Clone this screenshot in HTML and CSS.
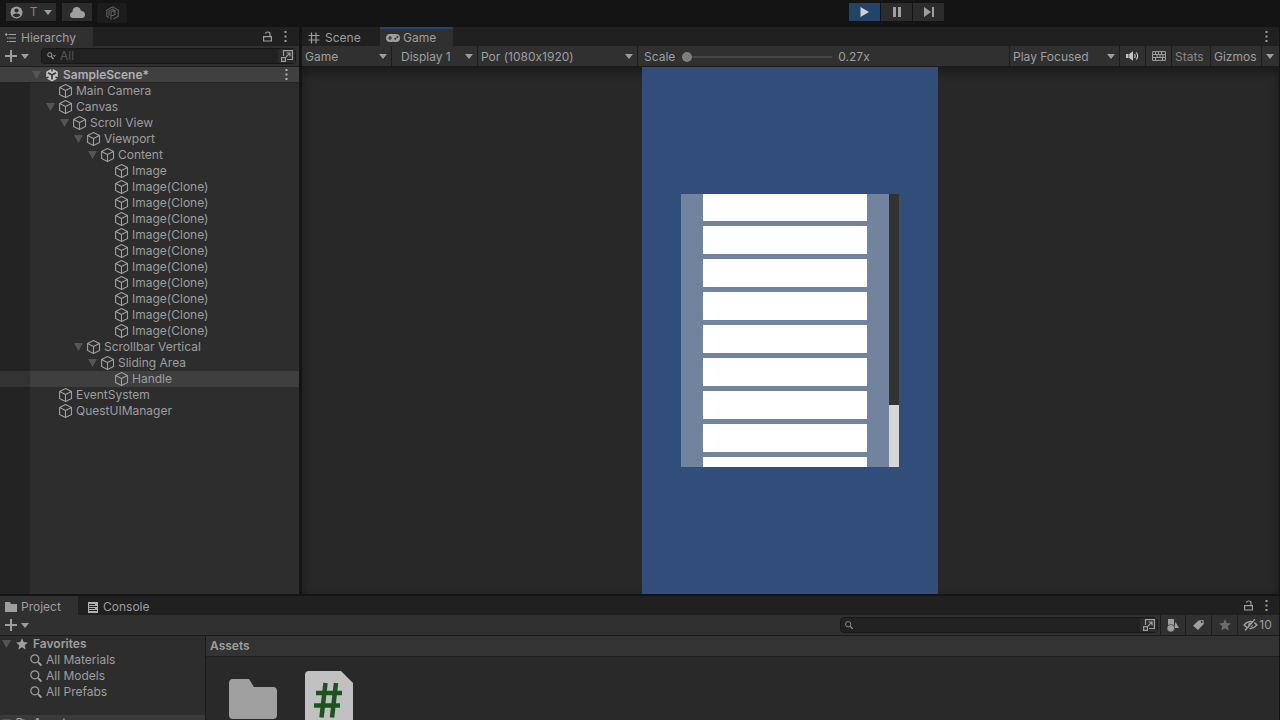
FILE: index.html
```html
<!DOCTYPE html>
<html lang="en">
<head>
<meta charset="utf-8">
<title>SampleScene - Editor</title>
<link rel="stylesheet" href="styles.css">
</head>
<body>
<svg class="defs" aria-hidden="true">
  <symbol id="cube" viewBox="0 0 14 14"><path d="M6.5 .6 12.5 3.4V10.6L6.5 13.4.6 10.6V3.4ZM.6 3.4 6.5 6.5 12.5 3.4M6.5 6.500V13.4" fill="none" stroke="currentColor" stroke-width="1.1" stroke-linejoin="round"/></symbol>
  <symbol id="unity" viewBox="0 0 14 14"><path d="M7 .5 12.8 3.7V10.3L7 13.5 1.2 10.3V3.7Z" fill="#c4c4c4"/><path d="M7 7V11.5M7 7 3 4.8M7 7 11 4.8" stroke="#3a3a3a" stroke-width="1.7" fill="none"/><path d="M7 0V3.4M0 10.8 3.6 8.8M14 10.8 10.4 8.8" stroke="#3a3a3a" stroke-width="1.5"/></symbol>
  <symbol id="arrow" viewBox="0 0 9 8"><path d="M0 0H9L4.5 8Z" fill="currentColor"/></symbol>
  <symbol id="plus" viewBox="0 0 12 12"><path d="M6 0V12M0 6H12" stroke="currentColor" stroke-width="2"/></symbol>
  <symbol id="dots" viewBox="0 0 3 11"><path d="M.5 0h2v2h-2zM.5 4.5h2v2h-2zM.5 9h2v2h-2z" fill="currentColor"/></symbol>
  <symbol id="lock" viewBox="0 0 9 11"><path d="M.6 5.6H8.4V10H.6ZM7 5.4V2.8Q7 1 4.8 1 2.6 1 2.5 2.6" fill="none" stroke="currentColor" stroke-width="1.2"/></symbol>
  <symbol id="popout" viewBox="0 0 12 12"><path d="M2.5 6V.6H11.4V9.5H6M.6 7.6H4.4V11.4H.6ZM5 7 8.8 3.2M5.6 3H9V6.5" fill="none" stroke="currentColor" stroke-width="1.2"/></symbol>
  <symbol id="lens" viewBox="0 0 12 12"><circle cx="4.8" cy="4.8" r="4" fill="none" stroke="currentColor" stroke-width="1.2"/><path d="M8 8 11.4 11.6" stroke="currentColor" stroke-width="1.9"/></symbol>
  <symbol id="star" viewBox="0 0 12 12"><path d="M6 .2 7.7 4.1 11.9 4.5 8.7 7.3 9.7 11.6 6 9.3 2.3 11.6 3.3 7.3.1 4.5 4.3 4.1Z" fill="currentColor"/></symbol>
  <symbol id="folder" viewBox="0 0 48 40"><path d="M4 0H20L25 8H44Q48 8 48 12V36Q48 40 44 40H4Q0 40 0 36V4Q0 0 4 0Z" fill="currentColor"/></symbol>
</svg>

<header class="topbar">
  <button class="top-btn account" aria-label="Account">
    <svg width="13" height="13" viewBox="0 0 13 13"><circle cx="6.5" cy="6.5" r="6" fill="#9f9f9f"/><circle cx="6.5" cy="4.5" r="2.1" fill="#2c2c2c"/><path d="M2.7 9.6Q3 7.6 6.5 7.6T10.3 9.6Q8.8 11.2 6.5 11.2T2.7 9.6Z" fill="#2c2c2c"/></svg>
    <span class="account-name">T</span><span class="caret"></span>
  </button>
  <button class="top-btn" aria-label="Cloud">
    <svg width="15" height="11" viewBox="0 0 15 11"><path d="M3.2 11Q0 10.7 0 7.9 0 5.5 2.4 5.1 2.6 0 6.8 0 10.2 0 11 3.8 15 4.2 15 7.5 15 10.8 12 11Z" fill="#9f9f9f"/></svg>
  </button>
  <button class="top-btn dim" aria-label="Packages">
    <svg width="13" height="14" viewBox="0 0 13 14"><path d="M3 11.6.8 10.2V4L6.5.8 12.2 4V10.2L7.5 13M5 13.5V6.3L6.5 5H7.500L9 6.3V8.3L7.500 9.500H5M3 9.800V5.200L6.500 3.100 10 5.200" fill="none" stroke="#606060" stroke-width="1.1"/></svg>
  </button>
  <div class="playback">
    <button class="top-btn on" aria-label="Play"><svg width="9" height="10" viewBox="0 0 9 10"><path d="M.5 0 9 5 .5 10Z" fill="#d0d0d0"/></svg></button>
    <button class="top-btn" aria-label="Pause"><svg width="8" height="10" viewBox="0 0 8 10"><path d="M0 0H3V10H0ZM5 0H8V10H5Z" fill="#9f9f9f"/></svg></button>
    <button class="top-btn" aria-label="Step"><svg width="10" height="10" viewBox="0 0 10 10"><path d="M0 0 7 5 0 10ZM8 0H10V10H8Z" fill="#9f9f9f"/></svg></button>
  </div>
</header>

<main class="upper">
  <section class="panel hierarchy">
    <div class="tabs">
      <button class="tab active tab-hierarchy"><svg width="11" height="10" viewBox="0 0 11 10"><path d="M0 1.5H2.5M3.5 1.5H11M3.5 5H11M3.5 8.5H11M1.3 0V3M2 5H3M2 8.5H3" stroke="currentColor" stroke-width="1.1"/></svg>Hierarchy</button>
      <span class="tab-tools">
        <button class="plain" aria-label="Lock"><svg width="9" height="11"><use href="#lock"/></svg></button>
        <button class="plain" aria-label="Hierarchy menu"><svg width="3" height="11"><use href="#dots"/></svg></button>
      </span>
    </div>
    <div class="bar hierarchy-bar">
      <button class="plain add" aria-label="Create"><svg width="12" height="12"><use href="#plus"/></svg><span class="caret"></span></button>
      <div class="search">
        <svg width="9" height="8" viewBox="0 0 9 8"><circle cx="2.8" cy="2.8" r="2.1" fill="none" stroke="currentColor"/><path d="M4.2 4.3 6.5 7" stroke="currentColor" stroke-width="1.3"/><path d="M6 3.2H9L7.5 5Z" fill="currentColor"/></svg>
        <input type="text" placeholder="All" aria-label="Search hierarchy">
        <button class="plain" aria-label="Open search window"><svg width="12" height="12"><use href="#popout"/></svg></button>
      </div>
    </div>
    <ul class="tree">
      <li class="row scene"><span class="fold"><svg><use href="#arrow"/></svg></span><svg class="ico"><use href="#unity"/></svg>SampleScene*<button class="plain scene-menu" aria-label="Scene menu"><svg width="3" height="11"><use href="#dots"/></svg></button></li>
      <li class="row l1"><span class="fold"></span><svg class="ico"><use href="#cube"/></svg>Main Camera</li>
      <li class="row l1"><span class="fold"><svg><use href="#arrow"/></svg></span><svg class="ico"><use href="#cube"/></svg>Canvas</li>
      <li class="row l2"><span class="fold"><svg><use href="#arrow"/></svg></span><svg class="ico"><use href="#cube"/></svg>Scroll View</li>
      <li class="row l3"><span class="fold"><svg><use href="#arrow"/></svg></span><svg class="ico"><use href="#cube"/></svg>Viewport</li>
      <li class="row l4"><span class="fold"><svg><use href="#arrow"/></svg></span><svg class="ico"><use href="#cube"/></svg>Content</li>
      <li class="row l5"><span class="fold"></span><svg class="ico"><use href="#cube"/></svg>Image</li>
      <li class="row l5"><span class="fold"></span><svg class="ico"><use href="#cube"/></svg>Image(Clone)</li>
      <li class="row l5"><span class="fold"></span><svg class="ico"><use href="#cube"/></svg>Image(Clone)</li>
      <li class="row l5"><span class="fold"></span><svg class="ico"><use href="#cube"/></svg>Image(Clone)</li>
      <li class="row l5"><span class="fold"></span><svg class="ico"><use href="#cube"/></svg>Image(Clone)</li>
      <li class="row l5"><span class="fold"></span><svg class="ico"><use href="#cube"/></svg>Image(Clone)</li>
      <li class="row l5"><span class="fold"></span><svg class="ico"><use href="#cube"/></svg>Image(Clone)</li>
      <li class="row l5"><span class="fold"></span><svg class="ico"><use href="#cube"/></svg>Image(Clone)</li>
      <li class="row l5"><span class="fold"></span><svg class="ico"><use href="#cube"/></svg>Image(Clone)</li>
      <li class="row l5"><span class="fold"></span><svg class="ico"><use href="#cube"/></svg>Image(Clone)</li>
      <li class="row l5"><span class="fold"></span><svg class="ico"><use href="#cube"/></svg>Image(Clone)</li>
      <li class="row l3"><span class="fold"><svg><use href="#arrow"/></svg></span><svg class="ico"><use href="#cube"/></svg>Scrollbar Vertical</li>
      <li class="row l4"><span class="fold"><svg><use href="#arrow"/></svg></span><svg class="ico"><use href="#cube"/></svg>Sliding Area</li>
      <li class="row l5 selected"><span class="fold"></span><svg class="ico"><use href="#cube"/></svg>Handle</li>
      <li class="row l1"><span class="fold"></span><svg class="ico"><use href="#cube"/></svg>EventSystem</li>
      <li class="row l1"><span class="fold"></span><svg class="ico"><use href="#cube"/></svg>QuestUIManager</li>
    </ul>
  </section>

  <section class="panel game">
    <div class="tabs">
      <button class="tab tab-scene"><svg width="12" height="12" viewBox="0 0 12 12"><path d="M3.5.5V11.5M8 .5V11.5M.5 3.5H11.5M.5 8H11.5" stroke="currentColor" stroke-width="1.2"/></svg>Scene</button>
      <button class="tab active focused tab-game"><svg width="14" height="8" viewBox="0 0 14 8"><rect width="14" height="8" rx="4" fill="currentColor"/><path d="M2 4H6M4 2V6" stroke="#303030" stroke-width="1.2"/><circle cx="9.3" cy="4.8" r="1" fill="#303030"/><circle cx="11.3" cy="3" r="1" fill="#303030"/><path d="M6 8Q7 6.8 8 8Z" fill="#303030"/></svg>Game</button>
      <span class="tab-tools"><button class="plain" aria-label="Game menu"><svg width="3" height="11"><use href="#dots"/></svg></button></span>
    </div>
    <div class="bar game-bar">
      <span class="drop drop-view"><select aria-label="View"><option>Game</option><option>Simulator</option></select><span class="caret"></span></span>
      <span class="drop drop-display"><select aria-label="Display"><option>Display 1</option><option>Display 2</option></select><span class="caret"></span></span>
      <span class="drop drop-size"><select aria-label="Resolution"><option>Por (1080x1920)</option><option>Free Aspect</option></select><span class="caret"></span></span>
      <span class="scale"><label for="scale">Scale</label><input id="scale" type="range" min="0" max="100" value="0"><output for="scale">0.27x</output></span>
      <span class="drop drop-play"><select aria-label="Play mode"><option>Play Focused</option><option>Play Maximized</option></select><span class="caret"></span></span>
      <button class="cell icon-cell lit" aria-label="Mute audio"><svg width="13" height="10" viewBox="0 0 13 10"><path d="M0 3H2.5V7H0ZM3.2 3 7 .3V9.7L3.2 7Z" fill="currentColor"/><path d="M8.5 3Q9.8 5 8.5 7M10.3 1.5Q13 5 10.3 8.5" fill="none" stroke="currentColor" stroke-width="1.2"/></svg></button>
      <button class="cell icon-cell" aria-label="Shortcuts"><svg width="14" height="10" viewBox="0 0 14 10"><path d="M.6.6H13.4V9.4H.6ZM.6 3.5H13.4M.6 6.5H13.4M3.5.6V3.5M6.5.6V3.5M9.5.6V3.5M5 3.5V6.5M8 3.5V6.5M11 3.5V6.5M3.5 6.5V9.4M10.5 6.5V9.4" fill="none" stroke="currentColor"/></svg></button>
      <button class="cell stats">Stats</button>
      <button class="cell gizmos">Gizmos</button>
      <button class="gizmo-menu" aria-label="Gizmo options"><span class="caret"></span></button>
    </div>
    <div class="viewport">
      <div class="screen">
        <div class="scroll-view">
          <div class="items"><i></i><i></i><i></i><i></i><i></i><i></i><i></i><i></i><i></i></div>
          <div class="scrollbar"><div class="handle"></div></div>
        </div>
      </div>
    </div>
  </section>
</main>

<section class="panel lower">
  <div class="tabs">
    <button class="tab active tab-project"><svg width="12" height="10" viewBox="0 0 12 10"><path d="M0 0H5L6 2H12V10H0Z" fill="currentColor"/></svg>Project</button>
    <button class="tab tab-console"><svg width="10" height="11" viewBox="0 0 10 11"><path d="M0 0H10V11H0Z" fill="#b0b0b0"/><path d="M1 2.500H7M1 4.500H9M1 6.500H7M1 8.500H9" stroke="#202020"/></svg>Console</button>
    <span class="tab-tools">
      <button class="plain" aria-label="Lock project"><svg width="9" height="11"><use href="#lock"/></svg></button>
      <button class="plain" aria-label="Project menu"><svg width="3" height="11"><use href="#dots"/></svg></button>
    </span>
  </div>
  <div class="bar project-bar">
    <button class="plain add" aria-label="Create asset"><svg width="12" height="12"><use href="#plus"/></svg><span class="caret"></span></button>
    <div class="search project-search">
      <svg width="8" height="8"><use href="#lens"/></svg>
      <input type="text" aria-label="Search project">
      <button class="plain" aria-label="Open search window"><svg width="12" height="12"><use href="#popout"/></svg></button>
    </div>
    <button class="cell icon-cell" aria-label="Search by type"><svg width="12" height="13" viewBox="0 0 12 13"><path d="M1 0H7V6H1ZM8.5 3 12 9H7Z" fill="currentColor"/><circle cx="3.8" cy="9.2" r="3.8" fill="currentColor" stroke="#303030" stroke-width=".6"/></svg></button>
    <button class="cell icon-cell" aria-label="Search by label"><svg width="11" height="10" viewBox="0 0 11 10"><path d="M5.5.5 10.5 0 10.8 4 5 10 0 5.8Z" fill="currentColor"/><circle cx="8.7" cy="2" r="1" fill="#303030"/></svg></button>
    <button class="cell icon-cell faint" aria-label="Save search"><svg width="12" height="12"><use href="#star"/></svg></button>
    <button class="cell hidden-count" aria-label="Hidden packages, 10"><svg width="15" height="12" viewBox="0 0 15 12"><path d="M1 6Q7.5-1 14 6 7.5 13 1 6Z" fill="none" stroke="currentColor" stroke-width="1.3"/><circle cx="7.5" cy="6" r="2.3" fill="currentColor"/><path d="M3 12.5 13 .5" stroke="#303030" stroke-width="1.3"/><path d="M2 11.5 12 0" stroke="currentColor" stroke-width="1.3"/></svg>10</button>
  </div>
  <div class="project-body">
    <ul class="favorites">
      <li class="row fav-head"><span class="fold"><svg><use href="#arrow"/></svg></span><svg width="12" height="12"><use href="#star"/></svg>Favorites</li>
      <li class="row fav"><svg width="12" height="12"><use href="#lens"/></svg>All Materials</li>
      <li class="row fav"><svg width="12" height="12"><use href="#lens"/></svg>All Models</li>
      <li class="row fav"><svg width="12" height="12"><use href="#lens"/></svg>All Prefabs</li>
      <li class="row fav-head assets-row"><span class="fold"><svg><use href="#arrow"/></svg></span><svg width="12" height="10" viewBox="0 0 12 10"><path d="M1 .6H4.500L6 2H8V4M1 .6V9.4H9L11 4H3L1 9.4" fill="none" stroke="currentColor" stroke-width="1.2"/></svg>Assets</li>
    </ul>
    <div class="assets">
      <h2>Assets</h2>
      <div class="tiles">
        <svg class="tile-folder" width="48" height="40" role="img" aria-label="Folder"><use href="#folder"/></svg>
        <svg width="48" height="56" viewBox="0 0 48 56" role="img" aria-label="C# script"><path d="M4 0H36L48 12V52Q48 56 44 56H4Q0 56 0 52V4Q0 0 4 0Z" fill="#c1c1c1"/><path d="M20.5 12 16.5 46.500M31 12 27 46.500M11 22H37M9 34.500H35" stroke="#1c5420" stroke-width="4.500" fill="none"/></svg>
      </div>
    </div>
  </div>
</section>
</body>
</html>
```

FILE: styles.css
```css
* { box-sizing: border-box; }
body {
  margin: 0;
  height: 100vh;
  display: flex;
  flex-direction: column;
  overflow: hidden;
  background: #141414;
  color: #9e9e9e;
  font: 12px/16px Inter, "Liberation Sans", sans-serif;
  font-feature-settings: "calt" 0;
}
button, input, select {
  margin: 0;
  padding: 0;
  border: 0;
  border-radius: 0;
  background: none;
  color: inherit;
  font: inherit;
  font-feature-settings: inherit;
}
svg { display: block; flex: none; }
ul { margin: 0; padding: 0; list-style: none; }
.defs { position: absolute; width: 0; height: 0; }
.plain { display: flex; align-items: center; }
.caret {
  flex: none;
  border: 4px solid transparent;
  border-top: 5px solid #9e9e9e;
  border-bottom: 0;
}

/* top toolbar */
.topbar {
  flex: none;
  display: flex;
  align-items: flex-start;
  gap: 5px;
  height: 27px;
  padding: 3px 336px 0 6px;
}
.top-btn {
  display: flex;
  align-items: center;
  justify-content: center;
  width: 30px;
  height: 18px;
  background: #2c2c2c;
}
.account { width: 50px; margin-right: 1px; gap: 7px; color: #858585; }
.dim { height: 20px; border-radius: 3px; background: #1c1c1c; }
.on { background: #214467; }
.playback { display: flex; gap: 1px; margin-left: auto; }
.playback .top-btn { width: 31px; }

/* panels */
.upper { flex: 1; display: flex; gap: 3px; min-height: 0; }
.panel { display: flex; flex-direction: column; min-width: 0; }
.hierarchy { flex: none; width: 299px; }
.game { flex: 1; margin-right: 1px; }
.lower { flex: none; height: 124px; margin: 2px 1px 0 0; overflow: hidden; }
.tabs { flex: none; display: flex; height: 19px; background: #202020; }
.tab {
  display: flex;
  align-items: center;
  gap: 5px;
  padding-top: 2px;
  border-top: 1px solid transparent;
}
.active { background: #303030; }
.focused { border-top: 2px solid #21476d; padding-top: 1px; }
.tab-hierarchy { width: 93px; padding-left: 5px; }
.tab-scene { width: 78px; padding-left: 6px; }
.tab-game { width: 73px; padding-left: 6px; gap: 3px; }
.tab-project { width: 78px; padding-left: 5px; gap: 4px; }
.tab-console { padding-left: 10px; }
.tab-tools { display: flex; gap: 12px; margin-left: auto; padding-right: 11px; }
.bar {
  flex: none;
  display: flex;
  align-items: stretch;
  height: 21px;
  background: #303030;
  border-bottom: 1px solid #1c1c1c;
}
.add { gap: 4px; }
.search {
  display: flex;
  align-items: center;
  gap: 5px;
  height: 16px;
  padding-left: 5px;
  border: 1px solid #181818;
  border-radius: 4px;
  background: #212121;
}
.search input { flex: 1; min-width: 0; height: 14px; outline: 0; }
.search input::placeholder { color: #555; opacity: 1; }
.search button { justify-content: center; width: 17px; height: 14px; background: #2b2b2b; }

/* hierarchy */
.hierarchy-bar { align-items: center; gap: 12px; padding: 0 3px 0 5px; }
.hierarchy-bar .search { flex: 1; gap: 4px; }
.hierarchy .tab-tools { padding-right: 12px; }
.tree { flex: 1; background: linear-gradient(90deg, #232323 30px, #2d2d2d 30px); overflow: hidden; }
.row { display: flex; align-items: center; gap: 3px; height: 16px; white-space: nowrap; }
.row .ico { width: 14px; height: 14px; }
.fold { width: 14px; margin-right: -1px; flex: none; color: #555; }
.fold svg { width: 9px; height: 8px; margin: 0 auto; }
.scene {
  padding-left: 29px;
  background: #404040;
  border-bottom: 1px solid #232323;
  font-weight: 600;
  color: #b0b0b0;
}
.scene .ico { margin-right: 1px; }
.scene-menu { margin-left: auto; padding-right: 11px; }
.l1 { padding-left: 43px; }
.l2 { padding-left: 57px; }
.l3 { padding-left: 71px; }
.l4 { padding-left: 85px; }
.l5 { padding-left: 99px; }
.selected { background: linear-gradient(90deg, #333 30px, #3f3f3f 30px); }

/* game */
.drop, .cell, .scale { border-right: 1px solid #1c1c1c; }
.drop { display: grid; align-items: center; flex: none; }
.drop > * { grid-area: 1 / 1; }
.drop select { appearance: none; width: 100%; height: 20px; padding: 2px 0 0 3px; outline: 0; }
.drop .caret { justify-self: end; margin-right: 4px; pointer-events: none; }
.drop-view { width: 90px; }
.drop-display { width: 86px; }
.drop-display select { padding-left: 9px; }
.drop-size { width: 160px; }
.drop-play { width: 110px; }
.scale { flex: 1; display: flex; align-items: center; padding: 2px 0 0 6px; }
.scale input {
  appearance: none;
  width: 150px;
  height: 10px;
  margin: 0 6px 0 7px;
  background: linear-gradient(#484848, #484848) center / 100% 2px no-repeat;
}
.scale input::-webkit-slider-thumb {
  appearance: none;
  width: 10px;
  height: 10px;
  border-radius: 50%;
  background: #7f7f7f;
}
.cell { display: flex; align-items: center; justify-content: center; flex: none; }
.icon-cell { width: 26px; }
.lit { color: #c4c4c4; }
.faint { color: #6c6c6c; }
.stats, .gizmos { justify-content: flex-start; padding: 2px 0 0 3px; }
.stats { width: 39px; color: #868686; }
.gizmos { width: 51px; }
.gizmo-menu { display: flex; align-items: center; padding: 0 5px 0 4px; }
.viewport {
  flex: 1;
  min-height: 0;
  display: flex;
  justify-content: center;
  padding-right: 1px;
  background: #282828;
  box-shadow: inset 0 4px 10px #181818;
}
.screen {
  display: flex;
  align-items: center;
  justify-content: center;
  height: 100%;
  aspect-ratio: 9 / 16;
  background: #314d79;
}
.scroll-view { display: flex; width: 218px; height: 273px; background: #72849d; overflow: hidden; }
.items {
  flex: 1;
  display: flex;
  flex-direction: column;
  gap: 5px;
  margin-top: -1px;
  padding: 0 22px;
}
.items i { flex: none; height: 28px; background: #fff; }
.scrollbar { display: flex; align-items: flex-end; width: 10px; background: #323232; }
.handle { width: 100%; height: 62px; background: #d6d6d6; }

/* project */
.project-bar { padding-left: 5px; }
.project-search { align-self: center; width: 318px; margin: 0 2px 0 auto; padding-left: 4px; }
.project-search + .cell { border-left: 1px solid #1c1c1c; }
.hidden-count { gap: 1px; width: 41px; padding-right: 2px; border-right: 0; }
.project-body { flex: 1; display: flex; min-height: 0; }
.favorites { flex: none; width: 206px; border-right: 1px solid #1a1a1a; background: #2d2d2d; }
.fav { gap: 4px; padding-left: 30px; }
.fav-head { gap: 5px; font-weight: 600; }
.fav-head .fold { width: 12px; }
.assets-row { margin-top: 15px; background: #3a3a3a; }
.assets { flex: 1; background: #292929; }
.assets h2 {
  margin: 0;
  padding: 2px 4px;
  height: 21px;
  border-bottom: 1px solid #202020;
  background: #333;
  font-size: 12px;
  font-weight: 600;
}
.tiles { display: flex; align-items: flex-start; gap: 28px; padding: 14px 23px; }
.tile-folder { margin-top: 8px; color: #9f9f9f; }
```
